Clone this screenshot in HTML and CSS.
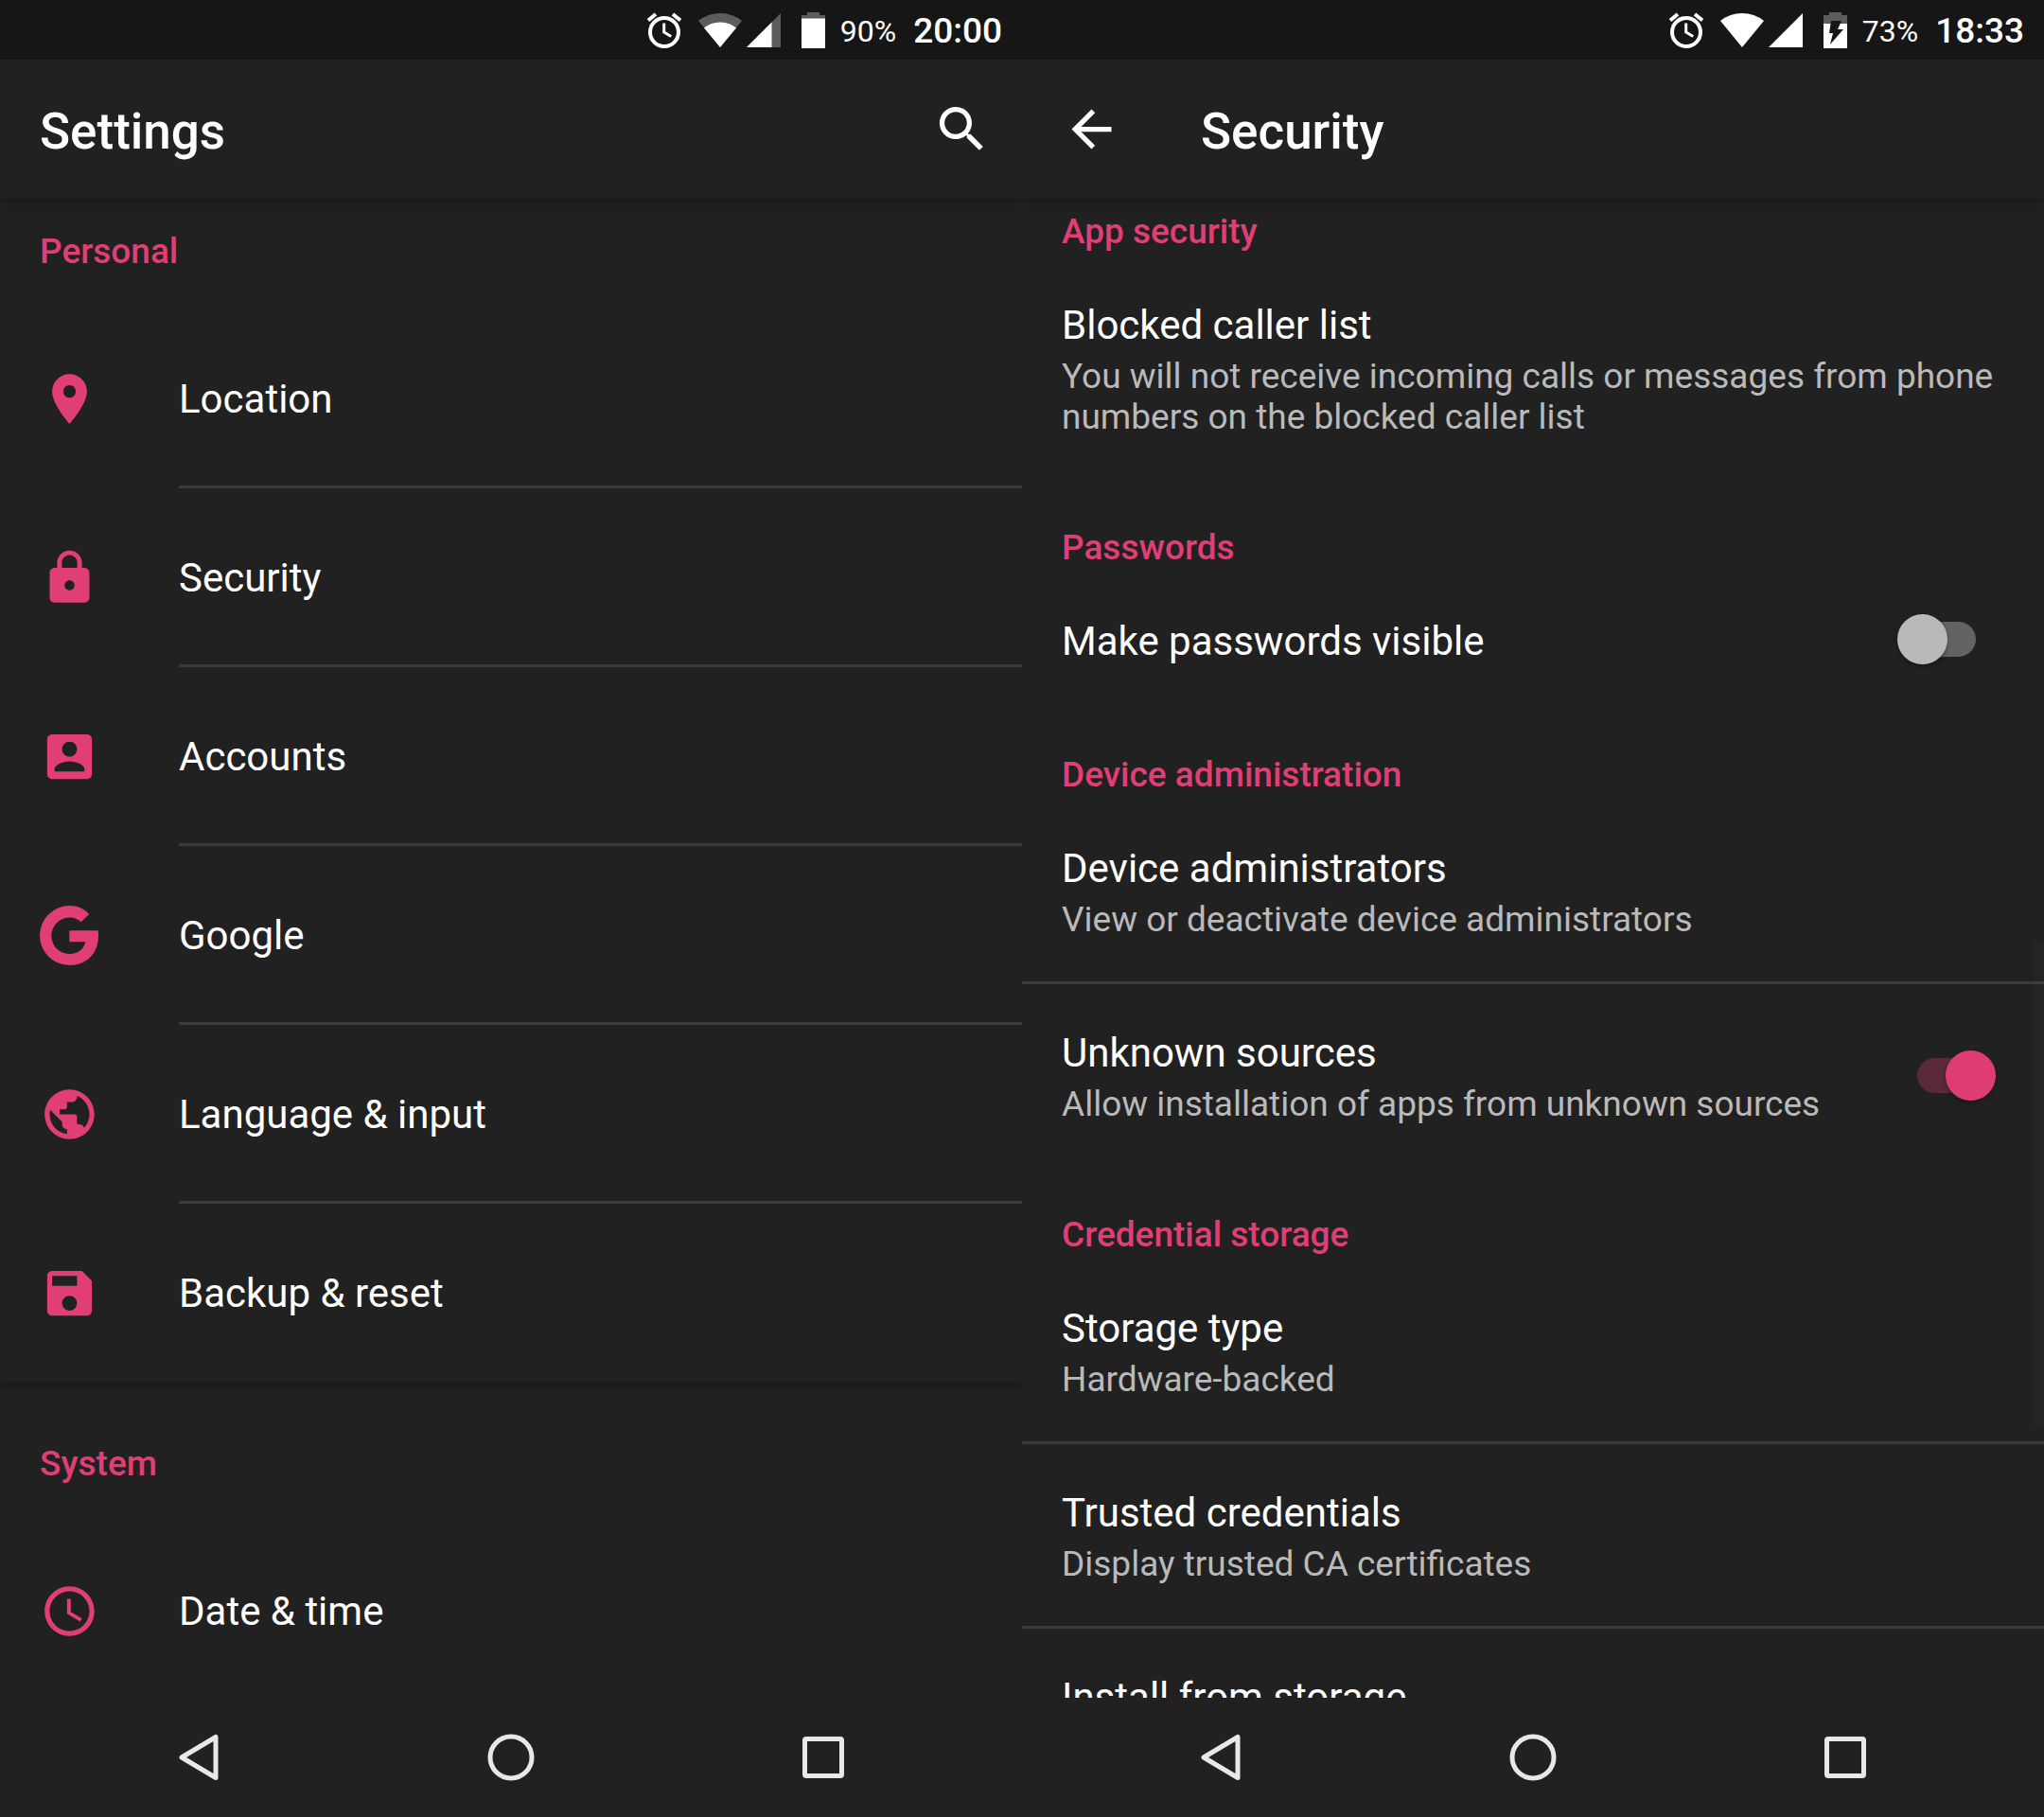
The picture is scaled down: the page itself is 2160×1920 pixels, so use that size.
FILE: index.html
```html
<!DOCTYPE html>
<html lang="en">
<head>
<meta charset="utf-8">
<meta name="viewport" content="width=device-width, initial-scale=1">
<title>Settings</title>
<link rel="stylesheet" href="styles.css">
</head>
<body>
<svg class="sprite" aria-hidden="true">
  <symbol id="alarm" viewBox="0 0 38 40">
    <circle cx="19" cy="22" r="15" fill="none" stroke="#fff" stroke-width="4"/>
    <path d="M18.700 12.500v9.500l7.500 4.500" fill="none" stroke="#fff" stroke-width="3"/>
    <path d="M2 9.500l8-6.500M36 9.500l-8-6.500" stroke="#fff" stroke-width="4"/>
  </symbol>
  <symbol id="nav-back" viewBox="0 0 50 50"><path d="M7 25L43 3.500v43z" fill="none" stroke="#e8e8e8" stroke-width="5" stroke-linejoin="round"/></symbol>
  <symbol id="nav-home" viewBox="0 0 50 50"><circle cx="25" cy="25" r="22" fill="none" stroke="#e8e8e8" stroke-width="5"/></symbol>
  <symbol id="nav-recent" viewBox="0 0 50 50"><rect x="5.500" y="5.500" width="39" height="39" rx="1.500" fill="none" stroke="#e8e8e8" stroke-width="5"/></symbol>
</svg>
<main class="screens">
  <section class="screen" aria-label="Settings">
    <div class="status">
      <svg class="status-alarm"><use href="#alarm"/></svg>
      <svg class="status-wifi" viewBox="0 0 46 36"><path d="M0 8Q10 0 23 0T46 8L23 36z" fill="#5c5c5c"/><path d="M6 15.500Q13 9.500 23 9.500T40 15.500L23 36z" fill="#fff"/></svg>
      <svg class="status-signal" viewBox="0 0 36 36"><path d="M36 0V36H0z" fill="#5c5c5c"/><path d="M26.500 9.500V36H0z" fill="#fff"/></svg>
      <svg class="status-battery" viewBox="0 0 25 38"><path d="M6 0h13v3h6v4H0V3h6z" fill="#5c5c5c"/><path d="M0 6.500h25V38H0z" fill="#fff"/></svg>
      <span class="percent">90%</span>
      <time class="clock">20:00</time>
    </div>
    <header class="appbar">
      <h1 class="title">Settings</h1>
      <button class="icon-button" type="button" aria-label="Search"><svg class="icon" viewBox="0 0 24 24"><path d="M15.500 14h-.79l-.28-.27C15.410 12.590 16 11.110 16 9.500 16 5.910 13.090 3 9.500 3S3 5.910 3 9.500 5.910 16 9.500 16c1.610 0 3.090-.59 4.230-1.570l.27.28v.79l5 4.990L20.490 19l-4.990-5zm-6 0C7.010 14 5 11.990 5 9.500S7.010 5 9.500 5 14 7.010 14 9.500 11.990 14 9.500 14z"/></svg></button>
    </header>
    <div class="content">
      <div class="list list-settings">
        <section class="card">
          <h2 class="group">Personal</h2>
          <a class="row" href="#location"><svg class="icon" viewBox="0 0 24 24"><path d="M12 2C8.130 2 5 5.130 5 9c0 5.250 7 13 7 13s7-7.750 7-13c0-3.870-3.130-7-7-7zm0 9.500c-1.380 0-2.500-1.120-2.500-2.500s1.120-2.500 2.500-2.500 2.500 1.120 2.500 2.500-1.120 2.500-2.500 2.500z"/></svg><span class="row-label">Location</span></a>
          <a class="row" href="#security"><svg class="icon" viewBox="0 0 24 24"><path d="M18 8h-1V6c0-2.760-2.240-5-5-5S7 3.240 7 6v2H6c-1.100 0-2 .9-2 2v10c0 1.100.9 2 2 2h12c1.100 0 2-.9 2-2V10c0-1.100-.9-2-2-2zm-6 9c-1.100 0-2-.9-2-2s.9-2 2-2 2 .9 2 2-.9 2-2 2zm3.100-9H8.900V6c0-1.710 1.390-3.100 3.100-3.100s3.100 1.390 3.100 3.100v2z"/></svg><span class="row-label">Security</span></a>
          <a class="row" href="#accounts"><svg class="icon" viewBox="0 0 24 24"><path d="M3 5v14c0 1.100.89 2 2 2h14c1.100 0 2-.9 2-2V5c0-1.100-.9-2-2-2H5c-1.110 0-2 .9-2 2zm12 4c0 1.660-1.340 3-3 3s-3-1.340-3-3 1.340-3 3-3 3 1.340 3 3zm-9 8c0-2 4-3.100 6-3.100s6 1.100 6 3.100v1H6v-1z"/></svg><span class="row-label">Accounts</span></a>
          <a class="row" href="#google"><svg class="icon" viewBox="0 0 63 63"><path d="M52.300 9C47 3 39.500 0 31.500 0A31.500 31.500 0 0 0 31.500 63C50 63 62 50 62 32Q62 29 61.500 26.300H31.300V38.300H48.300C46.500 46 40.500 51 31.500 51A19.200 19.200 0 0 1 31.500 12.600C36 12.600 40.500 14.200 43.700 17.300Z"/></svg><span class="row-label">Google</span></a>
          <a class="row" href="#language"><svg class="icon" viewBox="0 0 24 24"><path d="M12 2C6.480 2 2 6.480 2 12s4.480 10 10 10 10-4.480 10-10S17.520 2 12 2zm-1 17.930c-3.950-.49-7-3.850-7-7.930 0-.62.08-1.210.21-1.790L9 15v1c0 1.100.9 2 2 2v1.930zm6.900-2.540c-.26-.81-1-1.390-1.900-1.390h-1v-3c0-.55-.45-1-1-1H8v-2h2c.55 0 1-.45 1-1V7h2c1.100 0 2-.9 2-2v-.41c2.930 1.190 5 4.060 5 7.410 0 2.080-.8 3.970-2.100 5.390z"/></svg><span class="row-label">Language &amp; input</span></a>
          <a class="row" href="#backup"><svg class="icon" viewBox="0 0 24 24"><path d="M17 3H5c-1.110 0-2 .9-2 2v14c0 1.100.89 2 2 2h14c1.100 0 2-.9 2-2V7l-4-4zm-5 16c-1.660 0-3-1.340-3-3s1.340-3 3-3 3 1.340 3 3-1.340 3-3 3zm3-10H5V5h10v4z"/></svg><span class="row-label">Backup &amp; reset</span></a>
        </section>
        <section class="card">
          <h2 class="group">System</h2>
          <a class="row" href="#date"><svg class="icon" viewBox="0 0 24 24"><path d="M11.990 2C6.470 2 2 6.480 2 12s4.470 10 9.990 10C17.520 22 22 17.520 22 12S17.520 2 11.990 2zM12 20c-4.420 0-8-3.580-8-8s3.580-8 8-8 8 3.580 8 8-3.580 8-8 8z"/><path d="M12.500 7H11v6l5.250 3.150.75-1.230-4.500-2.670z"/></svg><span class="row-label">Date &amp; time</span></a>
        </section>
      </div>
    </div>
    <nav class="navbar" aria-label="System">
      <button class="nav-button" type="button" aria-label="Back"><svg class="nav-icon"><use href="#nav-back"/></svg></button>
      <button class="nav-button" type="button" aria-label="Home"><svg class="nav-icon"><use href="#nav-home"/></svg></button>
      <button class="nav-button" type="button" aria-label="Recent apps"><svg class="nav-icon"><use href="#nav-recent"/></svg></button>
    </nav>
  </section>

  <section class="screen" aria-label="Security">
    <div class="status">
      <svg class="status-alarm"><use href="#alarm"/></svg>
      <svg class="status-wifi" viewBox="0 0 46 36"><path d="M0 8Q10 0 23 0T46 8L23 36z" fill="#fff"/></svg>
      <svg class="status-signal" viewBox="0 0 36 36"><path d="M36 0V36H0z" fill="#fff"/></svg>
      <svg class="status-battery" viewBox="0 0 25 38"><path d="M6 0h13v3h6v10H0V3h6z" fill="#5c5c5c"/><path d="M0 12h25v26H0z" fill="#fff"/><path d="M8 9h11l-4 9h6L7 34l3-12H6z" fill="#161616"/></svg>
      <span class="percent">73%</span>
      <time class="clock">18:33</time>
    </div>
    <header class="appbar appbar-back">
      <button class="icon-button" type="button" aria-label="Navigate up"><svg class="icon" viewBox="0 0 24 24"><path d="M20 11H7.830l5.590-5.590L12 4l-8 8 8 8 1.410-1.410L7.830 13H20v-2z"/></svg></button>
      <h1 class="title">Security</h1>
    </header>
    <div class="content">
      <div class="list list-security">
        <h2 class="category">App security</h2>
        <a class="pref" href="#blocked"><span class="pref-title">Blocked caller list</span><span class="summary">You will not receive incoming calls or messages from phone numbers on the blocked caller list</span></a>
        <h2 class="category">Passwords</h2>
        <label class="pref pref-toggle"><span class="pref-text"><span class="pref-title">Make passwords visible</span></span><input class="switch" type="checkbox"></label>
        <h2 class="category">Device administration</h2>
        <a class="pref divided" href="#admins"><span class="pref-title">Device administrators</span><span class="summary">View or deactivate device administrators</span></a>
        <label class="pref pref-toggle"><span class="pref-text"><span class="pref-title">Unknown sources</span><span class="summary">Allow installation of apps from unknown sources</span></span><input class="switch" type="checkbox" checked></label>
        <h2 class="category">Credential storage</h2>
        <a class="pref divided" href="#storage"><span class="pref-title">Storage type</span><span class="summary">Hardware-backed</span></a>
        <a class="pref divided" href="#trusted"><span class="pref-title">Trusted credentials</span><span class="summary">Display trusted CA certificates</span></a>
        <a class="pref" href="#install"><span class="pref-title">Install from storage</span></a>
      </div>
      <div class="scroll-thumb"></div>
    </div>
    <nav class="navbar" aria-label="System">
      <button class="nav-button" type="button" aria-label="Back"><svg class="nav-icon"><use href="#nav-back"/></svg></button>
      <button class="nav-button" type="button" aria-label="Home"><svg class="nav-icon"><use href="#nav-home"/></svg></button>
      <button class="nav-button" type="button" aria-label="Recent apps"><svg class="nav-icon"><use href="#nav-recent"/></svg></button>
    </nav>
  </section>
</main>
</body>
</html>
```
FILE: styles.css
```css
:root {
  --bg: #212121;
  --accent: #e03e75;
  --line: #3a3a3a;
}

* { box-sizing: border-box; }

body {
  margin: 0;
  background: var(--bg);
  color: #fff;
  font-family: Roboto, "Liberation Sans", sans-serif;
}

h1, h2 { margin: 0; font-weight: 500; }
a { color: inherit; text-decoration: none; }
button { border: 0; padding: 0; background: none; color: inherit; }
svg { display: block; flex: none; }
.sprite { display: none; }

.screens {
  display: grid;
  grid-template-columns: 1fr 1fr;
  height: 100vh;
}

.screen {
  display: flex;
  flex-direction: column;
  min-width: 0;
  min-height: 0;
  overflow: hidden;
}

/* Status bar */
.status {
  display: flex;
  flex: none;
  align-items: center;
  justify-content: flex-end;
  height: 63px;
  padding-right: 21px;
  background: #161616;
}
.status-alarm { width: 38px; height: 40px; margin-right: 17px; }
.status-wifi { width: 46px; height: 36px; margin-right: 5px; }
.status-signal { width: 36px; height: 36px; margin-right: 22px; }
.status-battery { width: 25px; height: 38px; margin-right: 16px; }
.percent { margin-right: 18px; padding-top: 2px; font-size: 32px; line-height: 38px; }
.clock { padding-top: 2px; font-size: 37px; font-weight: 500; line-height: 43px; }

/* App bar */
.appbar {
  position: relative;
  z-index: 1;
  display: flex;
  flex: none;
  align-items: center;
  justify-content: space-between;
  height: 147px;
  padding: 0 32px 0 42px;
  background: var(--bg);
  box-shadow: 0 4px 8px rgba(0, 0, 0, .25);
}
.appbar-back { justify-content: flex-start; gap: 84px; }
.title { padding-top: 4px; font-size: 53px; line-height: 62px; }
.icon { width: 63px; height: 63px; fill: currentColor; }

.content {
  position: relative;
  flex: 1;
  min-height: 0;
  overflow: hidden;
}

/* Settings list, scrolled slightly under the app bar */
.list-settings { margin-top: -9px; }
.card { box-shadow: 0 4px 8px rgba(0, 0, 0, .25); }
.card + .card { padding-top: 21px; }
.group {
  padding: 43px 42px 40px;
  color: var(--accent);
  font-size: 37px;
  line-height: 43px;
}
.row {
  display: flex;
  align-items: center;
  gap: 84px;
  height: 189px;
  padding-left: 42px;
  color: var(--accent);
}
.row-label {
  flex: 1;
  padding: 70px 0 67px;
  border-bottom: 3px solid var(--line);
  color: #fff;
  font-size: 42px;
  line-height: 49px;
}
.row:last-child .row-label { border-color: transparent; }

/* Security list, scrolled slightly under the app bar */
.list-security { margin-top: -35px; }
.category {
  padding: 48px 42px 5px;
  color: var(--accent);
  font-size: 37px;
  line-height: 43px;
}
.pref { display: block; padding: 48px 42px 47px; }
.divided { padding-bottom: 44px; border-bottom: 3px solid var(--line); }
.pref-toggle {
  display: flex;
  align-items: center;
  justify-content: space-between;
  padding-right: 51px;
}
.pref-title { display: block; font-size: 42px; line-height: 49px; }
.summary {
  display: block;
  margin-top: 8px;
  color: #bababa;
  font-size: 37px;
  line-height: 43px;
}

.switch {
  position: relative;
  flex: none;
  width: 104px;
  height: 53px;
  margin: -4px 0 0;
  appearance: none;
}
.switch::before {
  content: "";
  position: absolute;
  inset: 8px 21px;
  border-radius: 19px;
  background: #636363;
}
.switch::after {
  content: "";
  position: absolute;
  top: 0;
  left: 0;
  width: 53px;
  height: 53px;
  border-radius: 50%;
  background: #b9b9b9;
  box-shadow: 0 2px 4px rgba(0, 0, 0, .35);
}
.switch:checked::before { background: #5a2a3a; }
.switch:checked::after { right: 0; left: auto; background: #dd3d73; }

.scroll-thumb {
  position: absolute;
  top: 785px;
  right: 0;
  width: 11px;
  height: 512px;
  background: rgba(255, 255, 255, .015);
}

/* Navigation bar */
.navbar {
  display: flex;
  flex: none;
  height: 126px;
  padding: 0 45px;
  background: var(--bg);
}
.nav-button { display: flex; flex: 1; align-items: center; justify-content: center; }
.nav-icon { width: 50px; height: 50px; }
```
